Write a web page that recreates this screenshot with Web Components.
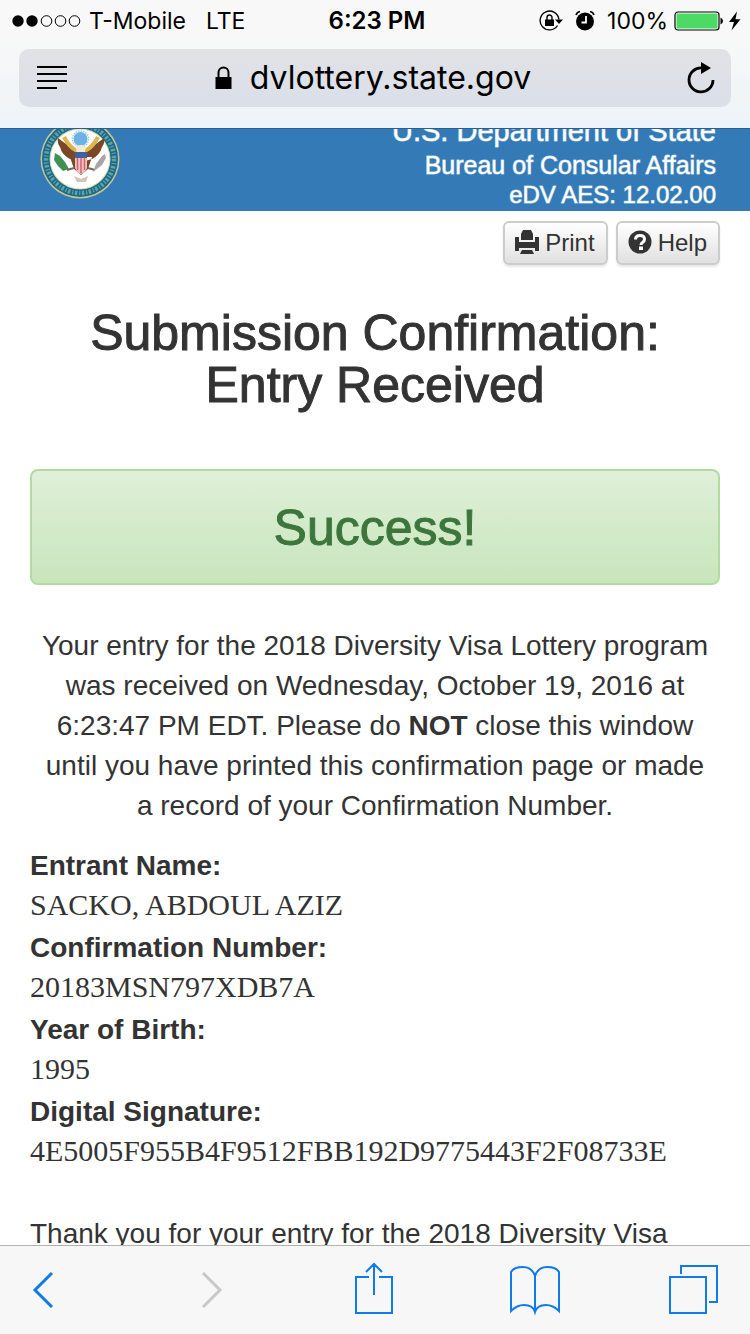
<!DOCTYPE html>
<html lang="en">
<head>
<meta charset="utf-8">
<meta name="viewport" content="width=device-width, initial-scale=1">
<title>Submission Confirmation</title>
<style>
  html, body { height: 100%; margin: 0; }
  body { font-family: "Liberation Sans", Arial, sans-serif; color: #333; background: #fff; }
</style>
</head>
<body>
<mobile-browser>
  <status-bar slot="top" carrier="T-Mobile" network="LTE" time="6:23 PM" battery="100%"></status-bar>
  <address-bar slot="top">dvlottery.state.gov</address-bar>
  <agency-header>
    <span slot="department">U.S. Department of State</span>
    <span slot="bureau">Bureau of Consular Affairs</span>
    <span slot="version">eDV AES: 12.02.00</span>
  </agency-header>
  <page-actions></page-actions>
  <confirmation-page>
    <span slot="title">Submission Confirmation: Entry Received</span>
    <span slot="alert">Success!</span>
    <span slot="message">Your entry for the 2018 Diversity Visa Lottery program was received on Wednesday, October 19, 2016 at 6:23:47 PM EDT. Please do <b>NOT</b> close this window until you have printed this confirmation page or made a record of your Confirmation Number.</span>
    <entry-field label="Entrant Name:">SACKO, ABDOUL AZIZ</entry-field>
    <entry-field label="Confirmation Number:">20183MSN797XDB7A</entry-field>
    <entry-field label="Year of Birth:">1995</entry-field>
    <entry-field label="Digital Signature:">4E5005F955B4F9512FBB192D9775443F2F08733E</entry-field>
    <span slot="thanks">Thank you for your entry for the 2018 Diversity Visa</span>
  </confirmation-page>
  <nav-toolbar slot="bottom"></nav-toolbar>
</mobile-browser>

<script>
const define = (name, html) => customElements.define(name, class extends HTMLElement {
  constructor() {
    super();
    this.attachShadow({ mode: 'open' }).innerHTML = typeof html === 'function' ? html(this) : html;
  }
});

define('mobile-browser', `
<style>
  :host { display: flex; flex-direction: column; height: 100vh; }
  .top { background: linear-gradient(#f8f8f8 30%, #edf3f8); border-bottom: 1px solid #285f92; }
  main { flex: 1; min-height: 0; overflow-y: auto; scrollbar-width: none; }
</style>
<div class="top"><slot name="top"></slot></div>
<main><slot></slot></main>
<slot name="bottom"></slot>`);

define('status-bar', el => `
<style>
  :host { display: grid; grid-template-columns: 1fr auto 1fr; align-items: center; height: 41px; padding: 0 8px 0 12px; font: 23px/40px Inter, sans-serif; color: #000; }
  div { display: flex; align-items: center; }
  .network { margin-left: 20px; }
  .dots { margin-right: 8px; }
  strong { font-size: 24px; font-weight: 600; }
  .right { justify-content: flex-end; }
  .lock, .alarm { margin-right: 12px; }
  .cell { margin-left: 6px; }
</style>
<div>
  <svg class="dots" width="69" height="12" viewBox="0 0 69 12"><g fill="#000"><circle cx="6" cy="6" r="5.7"/><circle cx="20" cy="6" r="5.7"/></g><g fill="none" stroke="#000"><circle cx="34.500" cy="6" r="5.300"/><circle cx="48.500" cy="6" r="5.300"/><circle cx="62.500" cy="6" r="5.300"/></g></svg>
  <span>${el.getAttribute('carrier')}</span><span class="network">${el.getAttribute('network')}</span>
</div>
<strong>${el.getAttribute('time')}</strong>
<div class="right">
  <svg class="lock" width="24" height="22" viewBox="0 0 24 22"><path d="M18.500 15.500A9.400 9.400 0 1 1 19.900 9.500" fill="none" stroke="#000" stroke-width="1.400"/><path d="M16 9.500h8l-4 4.500z"/><path d="M6 9.500h9v6.500H6z"/><path d="M8 10V7.500a2.500 2.500 0 0 1 5 0V10" fill="none" stroke="#000" stroke-width="1.400"/></svg>
  <svg class="alarm" width="20" height="22" viewBox="0 0 20 22"><circle cx="10" cy="11.500" r="9"/><path d="M11 6V12.500H6.500" fill="none" stroke="#fff" stroke-width="1.800"/><path d="M1 5Q2 2 5 1.500M15 1.500q3 .5 4 3.500" fill="none" stroke="#000" stroke-width="1.600"/></svg>
  <span>${el.getAttribute('battery')}</span>
  <svg class="cell" width="68" height="20" viewBox="0 0 68 20"><rect x="1" y="1" width="44" height="18" rx="3" fill="#fff" stroke="#000" stroke-width="1.200"/><rect x="2.500" y="2.500" width="41" height="15" rx="1" fill="#4cd964"/><path d="M46.500 6.500q2.500 1 2.500 3.500t-2.500 3.500z"/><path d="M63 .5L55 11h5L57.500 19.500 66.500 8.300h-5z"/></svg>
</div>`);

define('address-bar', `
<style>
  :host { display: block; padding: 8px 19px 21px; }
  form { display: flex; justify-content: space-between; align-items: center; height: 58px; margin: 0; padding: 0 16px; border-radius: 10px; background: linear-gradient(#e1e2e6, #dadfe8); }
  button { display: flex; border: 0; padding: 0; background: none; }
  a { display: flex; align-items: center; gap: 18px; padding-right: 10px; font: 32px/58px Inter, sans-serif; color: #000; text-decoration: none; }
</style>
<form>
  <button type="button" aria-label="Reader view"><svg width="34" height="26" viewBox="0 0 34 26"><path d="M2 2h30M2 9h30M2 16h30M2 23h20" stroke="#000" stroke-width="2"/></svg></button>
  <a href="#"><svg width="17" height="24" viewBox="0 0 17 24"><path d="M.5 11h16v12h-16z"/><path d="M3.500 12V6.500a5 5 0 0 1 10 0V12" fill="none" stroke="#000" stroke-width="2"/></svg><span><slot></slot></span></a>
  <button type="button" aria-label="Reload"><svg width="28" height="32" viewBox="0 0 28 32"><path d="M15 6A12 12 0 1 0 26 18" fill="none" stroke="#000" stroke-width="2.800"/><path d="M14 0v12l10-6z"/></svg></button>
</form>`);

define('agency-header', `
<style>
  :host { display: flex; justify-content: space-between; align-items: flex-end; height: 82px; overflow: hidden; padding: 0 34px 0 40px; background: #337ab7; color: #fff; }
  svg { flex: none; margin-bottom: 12px; }
  div { display: flex; flex-direction: column; text-align: right; white-space: nowrap; padding-bottom: 1px; font-size: 24px; line-height: 30px; -webkit-text-stroke: 1px rgba(255,255,255,.6); }
  .department { font-size: 29px; line-height: 38px; }
  .bureau { font-size: 25px; }
</style>
<svg width="80" height="80" viewBox="0 0 80 80" role="img" aria-label="Department seal">
  <circle cx="40" cy="40" r="39.500" fill="#c9c886"/><circle cx="40" cy="40" r="38" fill="#146a94"/>
  <circle cx="40" cy="40" r="34" fill="none" stroke="#8db99a" stroke-width="4.500" stroke-dasharray="2.500 1.500 1.200 1.800" opacity=".7"/>
  <circle cx="40" cy="40" r="30.500" fill="#d8d7a0"/><circle cx="40" cy="40" r="29.500" fill="#fff"/>
  <circle cx="40.500" cy="20" r="7" fill="#6db2e4"/><circle cx="40.500" cy="20" r="8" fill="none" stroke="#9ccbe9" stroke-width="1.500" stroke-dasharray="1.500 1"/>
  <path d="M37 42L30 40Q22 36 20 28q-3-4-2-9 6 5 12 8l7 6zM45 42l7-2q8-4 10-12 3-4 2-9-6 5-12 8l-7 6zM30 38h22l-4 12-7 6-7-6z" fill="#7a4826"/>
  <path d="M24 18q5 10 13 14M58 18q-5 10-13 14" fill="none" stroke="#ddb44d" stroke-width="4"/>
  <path d="M36 31q0-5 5-5 4 0 5 4l-3 4h-6z" fill="#f3ead0"/>
  <path d="M35 33h12v6H35z" fill="#3a62a2"/><path d="M35 39h12v10q-2 5-6 6-4-1-6-6z" fill="#f2c2c2"/>
  <path d="M37.500 39v12M41 39v15M44.500 39v12" stroke="#cd6570" stroke-width="1.500"/>
  <path d="M15 34l5 3 5 6 4 7-6 2-5-5-4-6z" fill="#3f9152"/><path d="M27 51l7-2M55 51l-7-2" stroke="#796b52" stroke-width="2"/>
  <path d="M53 53l3-8 6-8 3-2 1 4-4 7z" fill="#a9a4a8"/><path d="M34 57l7 3 7-3-2 6h-9z" fill="#cfc7ba"/>
</svg>
<div><span class="department"><slot name="department"></slot></span><span class="bureau"><slot name="bureau"></slot></span><span><slot name="version"></slot></span></div>`);

define('page-actions', `
<style>
  :host { display: flex; justify-content: flex-end; gap: 8px; padding: 10px 30px 0; }
  button { display: flex; align-items: center; gap: 5px; height: 44px; padding: 0 11px 0 10px; border: 2px solid #ccc; border-radius: 6px; background: linear-gradient(#fff, #e0e0e0); box-shadow: 0 2px 2px rgba(0,0,0,.1); font: 24px/40px "Liberation Sans", Arial, sans-serif; color: #333; }
  svg { margin: 0 1px 3px 0; }
</style>
<button type="button"><svg width="24" height="24" viewBox="0 0 24 24" fill="#333"><path d="M8 0h8l2 4v6H6V4z"/><path d="M0 7h4v5h16V7h4v14h-4v-3H4v3H0z"/><path d="M7 20h10l2 4H5z"/></svg>Print</button>
<button type="button"><svg width="24" height="24" viewBox="0 0 24 24"><circle cx="12" cy="12" r="11.500" fill="#333"/><path d="M7.500 9.500Q7.500 5.500 12 5.500t4.500 3.700q0 2-2 3.300-1.500 1-1.500 2.500" fill="none" stroke="#fff" stroke-width="3"/><path d="M11 16.500h4v3.500h-4z" fill="#fff"/></svg>Help</button>`);

define('confirmation-page', `
<style>
  :host { display: block; padding: 42px 30px 0; font-size: 28px; line-height: 40px; }
  h1, h2 { margin: 0; font-size: 50px; line-height: 52px; font-weight: 400; text-align: center; -webkit-text-stroke: 1px; }
  h1 { padding: 0 50px; }
  h2 { margin: 58px 0 41px; padding: 31px 30px 29px; border: 2px solid #b2dba1; border-radius: 8px; background: linear-gradient(#dff0d8, #c8e5bc); color: #3c763d; }
  p { margin: 0; }
  .message { padding: 0 10px; text-align: center; }
  .fields { margin: 20px 0 40px; }
</style>
<h1><slot name="title"></slot></h1>
<h2 role="status"><slot name="alert"></slot></h2>
<p class="message"><slot name="message"></slot></p>
<div class="fields"><slot></slot></div>
<p><slot name="thanks"></slot></p>`);

define('entry-field', el => `
<style>
  :host { display: block; }
  dl, dd { margin: 0; }
  dt { font-weight: 700; }
  dd { padding-bottom: 4px; font: 30px/38px "Liberation Serif", "Times New Roman", serif; overflow-wrap: anywhere; }
</style>
<dl><dt>${el.getAttribute('label')}</dt><dd><slot></slot></dd></dl>`);

define('nav-toolbar', `
<style>
  :host { display: block; }
  nav { display: flex; justify-content: space-between; align-items: center; height: 88px; padding: 0 26px 0 4px; border-top: 1px solid #b2b2b2; background: #f7f7f7; }
  button { display: flex; justify-content: center; width: 68px; border: 0; padding: 0; background: none; color: #0f7aeb; }
  .back { width: 78px; }
  .wide { width: 62px; }
  svg { flex: none; fill: none; stroke: currentColor; stroke-width: 2; }
  button:disabled { color: #c8c8c8; }
</style>
<nav>
  <button type="button" class="back" aria-label="Back"><svg width="26" height="56" viewBox="0 0 26 56"><path d="M22 11L5 28l17 17" stroke-width="3"/></svg></button>
  <button type="button" aria-label="Forward" disabled><svg width="26" height="56" viewBox="0 0 26 56"><path d="M4 11l17 17L4 45" stroke-width="3"/></svg></button>
  <button type="button" aria-label="Share"><svg width="40" height="56" viewBox="0 0 40 56"><path d="M14 15H1v36h36V15H24M19 33V2M11 10l8-8 8 8"/></svg></button>
  <button type="button" class="wide" aria-label="Bookmarks"><svg width="52" height="56" viewBox="0 0 52 56"><path d="M25 50V14Q22 5 13 5 4 5 1 10V49Q7 43 14 43q9 0 11 7 2-7 11-7 7 0 13 6V10Q46 5 37 5q-9 0-12 9"/></svg></button>
  <button type="button" class="wide" aria-label="Tabs"><svg width="52" height="56" viewBox="0 0 52 56"><path d="M3 15h36v36H3zM14 12V4h36v36h-8"/></svg></button>
</nav>`);
</script>
</body>
</html>
